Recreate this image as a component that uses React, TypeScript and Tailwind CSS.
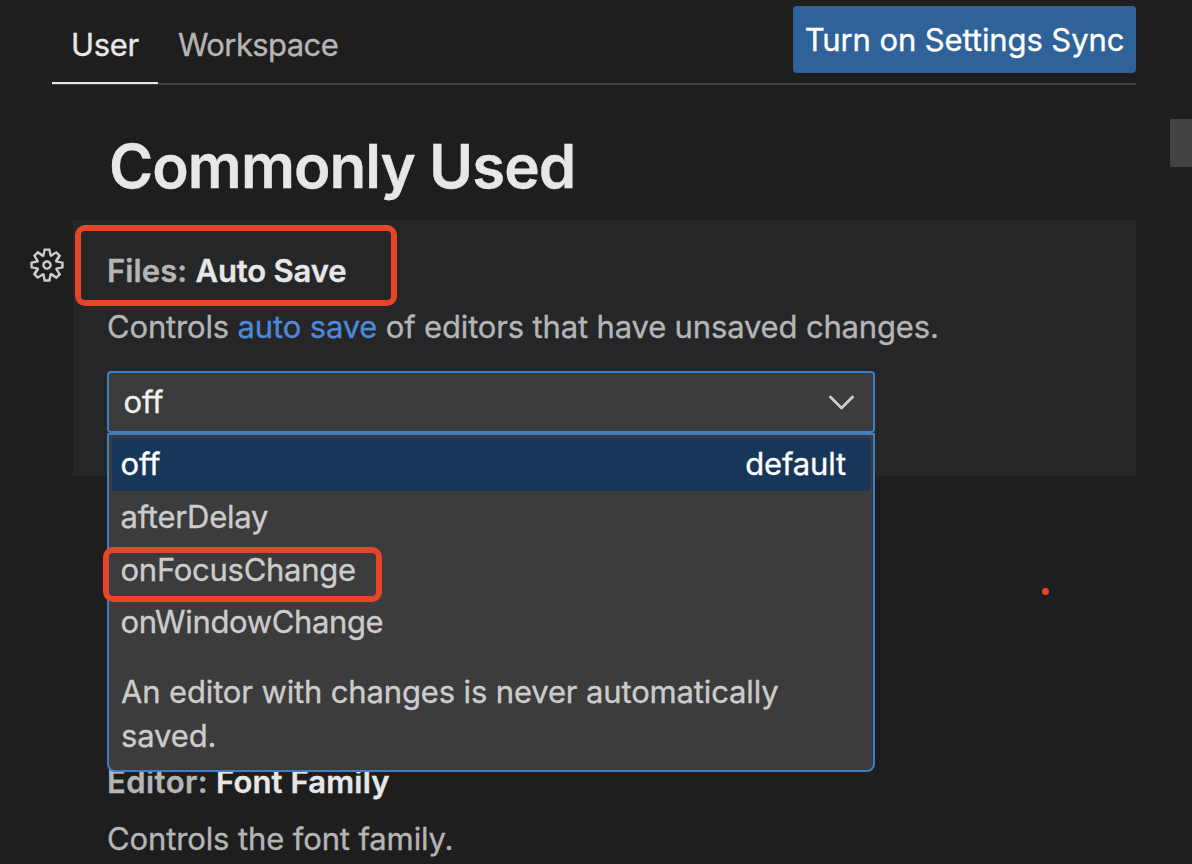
import { VscGear } from 'react-icons/vsc';

const options = [
  { label: 'off', detail: 'default', selected: true },
  { label: 'afterDelay' },
  { label: 'onFocusChange', marked: true },
  { label: 'onWindowChange' },
];

function Header() {
  return (
    <header className="mr-[56px] ml-[52px] flex h-[85px] items-start border-b-2 border-[#404040] leading-10">
      <div className="h-[84px] w-[106px] shrink-0 border-b-2 border-[#e7e7e7] pt-[25px] pl-[19px] tracking-[-0.3px] text-[#e7e7e7]">User</div>
      <div className="pt-[25px] pl-[20px] tracking-[-0.6px] text-[#b5b5b5]">Workspace</div>
      <button className="mt-1.5 ml-auto flex h-[67px] w-[343px] items-center justify-center rounded bg-[#2e6298] tracking-[-0.09px] text-white">
        Turn on Settings Sync
      </button>
    </header>
  );
}

function SettingTitle({ category, name, tight }: { category: string; name: string; tight?: boolean }) {
  return (
    <h2 className="flex font-semibold whitespace-nowrap">
      <span className={tight ? 'w-[109px] tracking-[0.45px] text-[#b5b5b5]' : 'w-[88.5px] tracking-[0.1px] text-[#b5b5b5]'}>{category}</span>
      <span className={tight ? 'tracking-[0.15px] text-[#e7e7e7]' : 'tracking-[-0.16px] text-[#e7e7e7]'}>{name}</span>
    </h2>
  );
}

function Dropdown() {
  return (
    <div className="absolute top-[60px] -left-0.5 h-[339px] w-[768px] rounded-b-lg border-2 border-[#437dbd] bg-[#3c3c3c] p-[3px] text-[#cccccc] shadow-[inset_0_0_0_1px_#293c50]">
      {options.map((o) => (
        <div
          key={o.label}
          className={
            o.selected
              ? 'relative flex h-[53px] items-center justify-between bg-[#17375a] pr-[24px] pb-px pl-[8.5px] text-white'
              : o.marked
                ? 'relative flex h-[53px] items-center justify-between pr-[24px] pb-px pl-[8.5px] tracking-[-0.26px]'
                : 'relative flex h-[52.5px] items-center justify-between pr-[24px] pb-px pl-[8.5px] tracking-[-0.26px]'
          }
        >
          <span className={o.label === 'onWindowChange' ? 'tracking-[-0.36px]' : ''}>{o.label}</span>
          {o.detail && <span>{o.detail}</span>}
          {o.marked && (
            <span className="absolute top-[3.5px] left-[-9px] h-[54.5px] w-[278.5px] rounded-[10px] border-6 border-[#e8442a]" />
          )}
        </div>
      ))}
      <p className="mt-[21px] w-[700px] pl-[9px] leading-11 tracking-[-0.14px]">An editor with changes is never automatically saved.</p>
    </div>
  );
}

export default function App() {
  return (
    <div className="relative h-[864px] w-[1192px] overflow-hidden bg-[#1e1e1e] font-['Inter',sans-serif] text-[31px] leading-10 tracking-[-0.16px] [-webkit-text-stroke:0.35px]">
      <Header />
      <h1 className="mt-[45px] ml-[109px] h-[90px] text-[60px] leading-[72px] font-semibold tracking-[-0.95px] text-[#e7e7e7]">
        Commonly Used
      </h1>
      <section className="flex">
        <div className="w-[73px] shrink-0 pt-[26px] pl-[27.5px]">
          <VscGear className="size-[38px] text-[#cccccc]" />
        </div>
        <div className="relative h-[256px] w-[1063px] bg-[#252627] pt-[31px] pl-[34px]">
          <SettingTitle category="Files:" name="Auto Save" />
          <span className="absolute top-[5px] left-[2px] h-[81px] w-[322px] rounded-[10px] border-6 border-[#e8442a]" />
          <p className="mt-4 whitespace-nowrap text-[#b5b5b5]">
            Controls <span className="text-[#4f87d9]">auto save</span> of editors that have unsaved changes.
          </p>
          <div className="relative z-10 mt-6 flex h-[62px] w-[768px] items-center justify-between rounded border-2 border-[#437dbd] bg-[#3c3c3c] pr-[18.5px] pl-[14.5px] text-[#f0f0f0] shadow-[inset_0_0_0_1px_#293c50]">
            <span>off</span>
            <svg className="h-[15px] w-[27px]" viewBox="0 0 27 15" fill="none" stroke="#cccccc" strokeWidth="2.8" strokeLinecap="round" strokeLinejoin="round">
              <path d="M2.4 2 13.5 13 24.6 2" />
            </svg>
            <Dropdown />
          </div>
        </div>
      </section>
      <section className="mt-[286px] ml-[107px]">
        <SettingTitle category="Editor:" name="Font Family" tight />
        <p className="mt-[17px] tracking-[-0.12px] text-[#b5b5b5]">Controls the font family.</p>
      </section>
      <div className="absolute top-[119px] right-0 h-12 w-[22px] bg-[#434343]" />
      <div className="absolute top-[588px] left-[1042px] size-[7px] rounded-full bg-[#e8442a]" />
    </div>
  );
}
